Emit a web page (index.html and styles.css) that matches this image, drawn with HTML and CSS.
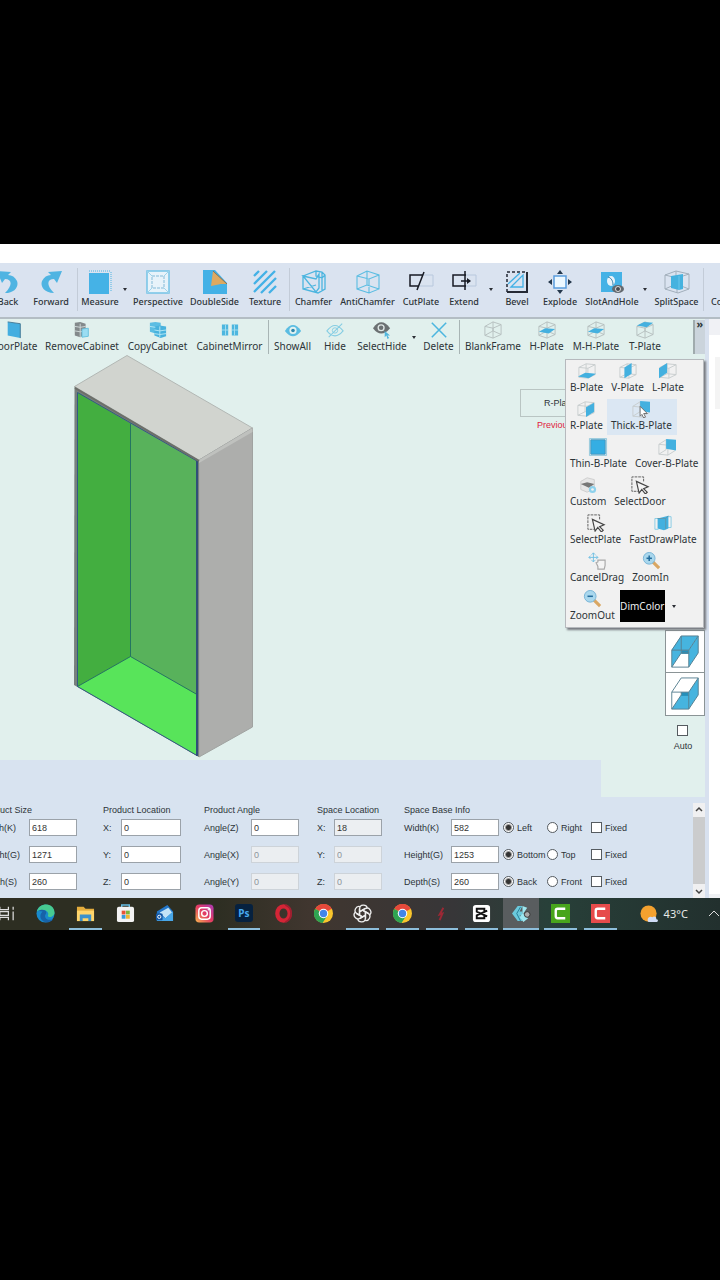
FILE: index.html
```html
<!DOCTYPE html>
<html lang="en">
<head>
<meta charset="utf-8">
<title>Cabinet Designer</title>
<link rel="stylesheet" href="styles.css">
</head>
<body>
<svg class="defs" aria-hidden="true">
  <defs>
    <symbol id="forward" viewBox="0 0 24 24"><path d="M9 2L23 1l-5 12-3-4C8 9 7 15 15 23 5 23 1 16 3 11c2-4 5-6 9-6z" fill="#4fb4e2"/></symbol>
    <symbol id="measure" viewBox="0 0 24 24"><path d="M1 1h21M23 2v20" stroke="#4fb4e2" stroke-dasharray="1 1"/><path d="M1 3h20v21H1z" fill="#45b2e6"/></symbol>
    <symbol id="perspective" viewBox="0 0 24 24"><path d="M1 1h22v22H1z" fill="#e8f3fa" stroke="#74c3e6" stroke-width="1.500"/><path d="M1 1l5 5M23 1l-5 5M1 23l5-5M23 23l-5-5" stroke="#9ed3ea"/><path d="M6 6h12v12H6z" fill="none" stroke="#84bbd8" stroke-dasharray="3 1"/></symbol>
    <symbol id="doubleside" viewBox="0 0 24 24"><path d="M0 0h12l12 13v11H0z" fill="#43b1e6"/><path d="M10 1l14 13-6 0-10 2z" fill="#dda960"/><path d="M10 1l14 13" stroke="#857257"/></symbol>
    <symbol id="texture" viewBox="0 0 24 24"><path d="M1 6l5-5M1 14L14 1M1 22L22 1M8 23L23 8M16 23l7-7" stroke="#43b1e6" stroke-width="2.300"/></symbol>
    <symbol id="cube" viewBox="0 0 24 24"><path d="M1 6l10-5 12 4v14l-10 4-12-4zM1 6l12 3 10-4M13 9v14M11 1v14L1 19M11 15l12 4" fill="none" stroke="currentColor" stroke-width="1.100"/></symbol>
    <symbol id="chamfer" viewBox="0 0 24 24"><path d="M1 6l13-5 6 1 3 3v14l-7 4-15-4zM1 6l13 3 3-5v14l-3 4zM14 1v5l6 2v13M14 15L1 19M20 2v6l3-3" fill="none" stroke="#4cb5df" stroke-width="1.300"/></symbol>
    <symbol id="cutplate" viewBox="0 0 24 24"><path d="M12 5h12v11H10" fill="none" stroke="#b8c8dd"/><path d="M14 5H1v11h8M15 2L8 20" fill="none" stroke="#171a23" stroke-width="1.500"/></symbol>
    <symbol id="extend" viewBox="0 0 24 24"><path d="M14 5h10v11H14" fill="none" stroke="#b8c8dd"/><path d="M14 5H1v11h13M13 1v19M9 11h9" fill="none" stroke="#171a23" stroke-width="1.500"/><path d="M15 8l4 3-4 3z" fill="#171a23"/></symbol>
    <symbol id="bevel" viewBox="0 0 24 24"><path d="M2 22V2h20" fill="none" stroke="#252a35" stroke-width="1.500" stroke-dasharray="3 2"/><path d="M22 2v20H2" fill="none" stroke="#252a35" stroke-width="2"/><path d="M6 17L18 5v12zM3 14L15 3" fill="none" stroke="#43b1e6" stroke-width="1.300"/></symbol>
    <symbol id="explode" viewBox="0 0 24 24"><path d="M6 6h12v12H6z" fill="#edf8ff" stroke="#5b9ddd" stroke-width="1.500"/><path d="M9 4l3-4 3 4zM9 20l3 4 3-4zM4 9l-4 3 4 3zM20 9l4 3-4 3z" fill="#24374b"/></symbol>
    <symbol id="slot" viewBox="0 0 24 24"><path d="M1 2h21v20H1z" fill="#45b2e6"/><ellipse cx="11" cy="11" rx="4" ry="5" fill="#e8f3fa"/><path d="M8 7c4 1 5 5 5 8" stroke="#2c7ba6" fill="none"/><ellipse cx="18" cy="19" rx="6" ry="4" fill="#646a70"/><circle cx="18" cy="19" r="2.500" fill="#464a4f" stroke="#ddd"/></symbol>
    <symbol id="split" viewBox="0 0 26 24"><path d="M1 5l11-4 13 3v15l-11 4-13-4zM1 5l12 3 12-4M13 8v15M12 1v13L1 19M12 14l13 5" fill="none" stroke="#a2afbb"/><path d="M7 6l12-2v15l-4 1-8-2z" fill="#45b2df"/><path d="M15 6v14" stroke="#6bc7ec"/></symbol>
    <symbol id="door" viewBox="0 0 20 20"><path d="M3 1l14 2v16L3 16z" fill="#43aee0"/><path d="M3 1l14 2v16" fill="none" stroke="#407693"/></symbol>
    <symbol id="remove" viewBox="0 0 20 20"><path d="M2 2l6-1 6 2v12l-6 3-6-2z" fill="#83898b"/><path d="M2 6l6 1 6-1M2 11l6 1 6-1M8 3v15" stroke="#d3dddd" fill="none"/><path d="M10 9l7-1v9l-7 1z" fill="#9bddf2" stroke="#63c0dd"/></symbol>
    <symbol id="copy" viewBox="0 0 20 20"><path d="M1 2l6-1 6 1v11l-6 1-6-2z" fill="#5bbde3"/><path d="M6 6l6-1 7 1v11l-6 2-7-3z" fill="#48b2dd"/><path d="M1 6l6 1M6 10l6 1 7-1M12 6v12M6 14l6 1 7-1" stroke="#b8e9f5" fill="none"/></symbol>
    <symbol id="mirror" viewBox="0 0 20 20"><path d="M1 4h7v12H1zM12 4h7v12h-7z" fill="#4db6df"/><path d="M5 4v12M15 4v12M1 10h7M12 10h7" stroke="#a9e0ef"/></symbol>
    <symbol id="eye" viewBox="0 0 20 20"><path d="M1 11q9-13 18 0-9 12-18 0z" fill="currentColor"/><circle cx="10" cy="10.500" r="4" fill="#e2f2f1"/><circle cx="10" cy="10.500" r="2" fill="#2f86ab"/></symbol>
    <symbol id="hide" viewBox="0 0 20 20"><path d="M1 11q9-12 18 0-9 11-18 0zM3 18L18 3" fill="none" stroke="#85cde3" stroke-width="1.200"/><circle cx="10" cy="10.500" r="3" fill="none" stroke="#85cde3"/></symbol>
    <symbol id="selecthide" viewBox="0 0 20 20"><path d="M0 8q9-13 19 0-10 12-19 0z" fill="#6b7072"/><circle cx="9" cy="7.500" r="4" fill="#dfe7e6"/><circle cx="9" cy="7.500" r="2.500" fill="#6b7072"/><path d="M13 11l6 5-3 0 2 3-2 1-1-4-2 2z" fill="#52b6dd"/></symbol>
    <symbol id="delete" viewBox="0 0 20 20"><path d="M2 2l16 16M18 2L2 18" stroke="#4cb6df" stroke-width="1.700"/></symbol>
    <symbol id="frame" viewBox="0 0 20 20"><path d="M1 6l9-5 9 3v11l-9 4-9-3zM1 6l9 2 9-4M10 8v11M10 1v10l-9 5M10 11l9 4" fill="none" stroke="#b4bdbd"/></symbol>
    <symbol id="box" viewBox="0 0 20 20"><path d="M1 6l8-4 10 1v11l-8 4-10-1zM1 6l10 1 8-4M11 7v11M9 2v11l-8 4M9 13l10 1" fill="none" stroke="#c6cccd"/></symbol>
    <symbol id="plate-h" viewBox="0 0 20 20"><use href="#frame"/><path d="M1 12l7-4 11 1-7 5z" fill="#43b0df"/></symbol>
    <symbol id="plate-t" viewBox="0 0 20 20"><use href="#frame"/><path d="M1 5l8-4 10 1-7 5z" fill="#43b0df"/></symbol>
    <symbol id="plate-b" viewBox="0 0 20 20"><use href="#box"/><path d="M0 16l8-4 12 1-8 5z" fill="#43b0df"/></symbol>
    <symbol id="plate-v" viewBox="0 0 20 20"><use href="#box"/><path d="M6 6l8-5v12l-8 5z" fill="#43b0df"/></symbol>
    <symbol id="plate-l" viewBox="0 0 20 20"><use href="#box"/><path d="M0 7l9-6v11l-9 6z" fill="#43b0df"/></symbol>
    <symbol id="plate-r" viewBox="0 0 20 20"><use href="#box"/><path d="M10 8l9-5v10l-9 6z" fill="#43b0df"/></symbol>
    <symbol id="plate-back" viewBox="0 0 20 20"><path d="M1 7l8-5v11l-8 5zM1 7l10 1v11l-10-1M11 19l8-5" fill="none" stroke="#c6cccd"/><path d="M9 1l11 1v12L9 12z" fill="#43b0df"/></symbol>
    <symbol id="thin" viewBox="0 0 20 20"><path d="M.5.5h19v19H.5z" fill="#f5f5f5" stroke="#8fc6da"/><path d="M2 2h16v16H2z" fill="#35aee3" stroke="#3f94bb"/></symbol>
    <symbol id="custom" viewBox="0 0 20 20"><path d="M2 6l7-4 8 2v10l-8 4-7-3z" fill="#e6e6e6" stroke="#ccc"/><path d="M2 9l7-2 8 2-6 4z" fill="#777"/><circle cx="15" cy="15" r="4" fill="#8dd1ec"/><circle cx="15" cy="15" r="1.500" fill="#f1f1f1"/></symbol>
    <symbol id="select" viewBox="0 0 20 20"><path d="M14 6V1H1v16h7" fill="none" stroke="#555" stroke-dasharray="3 1"/><path d="M6 6l13 6-5 2 4 4-2 2-4-5-3 4z" fill="#f4f4f4" stroke="#444" stroke-width="1.300"/></symbol>
    <symbol id="fast" viewBox="0 0 20 20"><path d="M1 5h4M1 5v12h4M15 3h4v12h-4" fill="none" stroke="#83cbe4"/><path d="M4 5l12-3v14l-5 2-7-2z" fill="#43b0df"/><path d="M13 5v12M4 5l9 0 3-3" fill="none" stroke="#5e96ac"/></symbol>
    <symbol id="drag" viewBox="0 0 20 20"><path d="M6 1v10M1 6h10M4 3l2-2 2 2M4 9l2 2 2-2M3 4L1 6l2 2M9 4l2 2-2 2" fill="none" stroke="#6cbde2"/><path d="M11 19v-3l-2-4 2-1V9h8v6l-1 4z" fill="#f4f4f4" stroke="#a9a9a9" stroke-width="1.300"/></symbol>
    <symbol id="lens" viewBox="0 0 20 20"><path d="M12 11l7 7" stroke="#d9a764" stroke-width="3.500"/><circle cx="8" cy="7" r="6.500" fill="#a9d7ed" stroke="#73b1d5"/><path d="M5 7h6" stroke="#236c9d" stroke-width="1.700"/></symbol>
    <symbol id="zoomin" viewBox="0 0 20 20"><use href="#lens"/><path d="M8 4v6" stroke="#236c9d" stroke-width="1.700"/></symbol>
    <symbol id="chrome" viewBox="0 0 20 20"><circle cx="10" cy="10" r="10" fill="#f9c52c"/><path d="M10 10L1.300 5A10 10 0 0 1 18.700 5z" fill="#e5483b"/><path d="M10 10v0L1.300 5A10 10 0 0 0 9 20l5-8z" fill="#2fa452"/><circle cx="10" cy="10" r="5" fill="#fff"/><circle cx="10" cy="10" r="3.900" fill="#4285e8"/></symbol>
  </defs>
</svg>

<main class="app">
  <div class="titlebar"></div>
  <nav class="ribbon" aria-label="Edit tools">
    <button class="tool"><svg class="flip"><use href="#forward"/></svg>Back</button>
    <button class="tool rule"><svg><use href="#forward"/></svg>Forward</button>
    <button class="tool"><svg><use href="#measure"/></svg>Measure</button>
    <button class="drop" aria-label="Measure options"></button>
    <button class="tool"><svg><use href="#perspective"/></svg>Perspective</button>
    <button class="tool"><svg><use href="#doubleside"/></svg>DoubleSide</button>
    <button class="tool rule"><svg><use href="#texture"/></svg>Texture</button>
    <button class="tool"><svg><use href="#chamfer"/></svg>Chamfer</button>
    <button class="tool blue"><svg><use href="#cube"/></svg>AntiChamfer</button>
    <button class="tool"><svg><use href="#cutplate"/></svg>CutPlate</button>
    <button class="tool"><svg><use href="#extend"/></svg>Extend</button>
    <button class="drop" aria-label="Extend options"></button>
    <button class="tool"><svg><use href="#bevel"/></svg>Bevel</button>
    <button class="tool"><svg><use href="#explode"/></svg>Explode</button>
    <button class="tool"><svg><use href="#slot"/></svg>SlotAndHole</button>
    <button class="drop" aria-label="Slot options"></button>
    <button class="tool rule"><svg><use href="#split"/></svg>SplitSpace</button>
    <button class="tool last">Co</button>
  </nav>

  <div class="body">
    <div class="work">
      <nav class="ribbon plates" aria-label="Plate tools">
        <button class="tool"><svg><use href="#door"/></svg>DoorPlate</button>
        <button class="tool"><svg><use href="#remove"/></svg>RemoveCabinet</button>
        <button class="tool"><svg><use href="#copy"/></svg>CopyCabinet</button>
        <button class="tool rule"><svg><use href="#mirror"/></svg>CabinetMirror</button>
        <button class="tool blue"><svg><use href="#eye"/></svg>ShowAll</button>
        <button class="tool"><svg><use href="#hide"/></svg>Hide</button>
        <button class="tool"><svg><use href="#selecthide"/></svg>SelectHide</button>
        <button class="drop" aria-label="Hide options"></button>
        <button class="tool rule"><svg><use href="#delete"/></svg>Delete</button>
        <button class="tool"><svg><use href="#frame"/></svg>BlankFrame</button>
        <button class="tool"><svg><use href="#plate-h"/></svg>H-Plate</button>
        <button class="tool"><svg><use href="#plate-h"/></svg>M-H-Plate</button>
        <button class="tool"><svg><use href="#plate-t"/></svg>T-Plate</button>
        <button class="more" aria-label="More tools">»</button>
      </nav>

      <section class="canvas">
        <svg class="cabinet" viewBox="74 355 180 404" role="img" aria-label="Cabinet model">
          <path d="M74.500 386.500L127 355.500 252.500 428 199 460z" fill="#d1d4cf" stroke="#b2b7b4"/>
          <path d="M199 460l53.500-32v299L199 757z" fill="#adaeac" stroke="#a0a3a1"/>
          <path d="M199 460l53.500-32v4L199 463z" fill="#bfc1be"/>
          <path d="M74.500 386.500L199 460v297l-2-1-123-71z" fill="#77807d"/>
          <path d="M77.500 392.500l53 31v233l-53 30z" fill="#43ae40"/>
          <path d="M130.500 423.500l66.500 38v233l-66.500-38z" fill="#58b25b"/>
          <path d="M77.500 686.500l53-30 66.500 38v61z" fill="#58e45a"/>
          <path d="M130.500 423.500v233l-53 30M130.500 656.500l66.500 38" fill="none" stroke="#247561"/>
          <path d="M77.500 392.500v294l119.500 69V461z" fill="none" stroke="#325b82"/>
          <path d="M197 461v295" stroke="#304f78" stroke-width="2"/>
          <path d="M75 388l124 73" stroke="#6d6e69" stroke-width="2"/>
        </svg>
        <div class="hint">
          <button class="current">R-Plate</button>
          <span class="previous">Previous</span>
        </div>
        <aside class="views">
          <button class="view" aria-label="Open front view"><svg viewBox="0 0 30 36"><path d="M1 16L11 1h18L19 16z" fill="#46b4df"/><path d="M1 16L11 1v18L1 34zM19 16L29 1v18L19 34z" fill="#46b4df"/><path d="M11 16h8v4h-8z" fill="#258fba"/><path d="M1 16h18v18H1zM1 16L11 1h18L19 16M29 1v18L19 34M11 1v18L1 34M11 19h8" fill="none" stroke="#577f91"/></svg></button>
          <button class="view" aria-label="Open top view"><svg viewBox="0 0 30 36"><path d="M1 34l10-15h8V16L29 1v18L19 34z" fill="#46b4df"/><path d="M11 16h8v4h-8z" fill="#258fba"/><path d="M1 16h18v18H1zM1 16L11 1h18L19 16M29 1v18L19 34M11 16v3L1 34" fill="none" stroke="#577f91"/></svg></button>
          <label class="auto"><input type="checkbox">Auto</label>
        </aside>
        <div class="popup">
          <div class="line"><button class="tool"><svg><use href="#plate-b"/></svg>B-Plate</button><button class="tool"><svg><use href="#plate-v"/></svg>V-Plate</button><button class="tool"><svg><use href="#plate-l"/></svg>L-Plate</button></div>
          <div class="line"><button class="tool"><svg><use href="#plate-r"/></svg>R-Plate</button><button class="tool hover"><svg viewBox="0 0 20 20"><use href="#plate-back"/><path d="M9 7v11l2-2 2 4 2-1-2-4h4z" fill="#fff" stroke="#666"/></svg>Thick-B-Plate</button></div>
          <div class="line"><button class="tool"><svg><use href="#thin"/></svg>Thin-B-Plate</button><button class="tool"><svg><use href="#plate-back"/></svg>Cover-B-Plate</button></div>
          <div class="line"><button class="tool"><svg><use href="#custom"/></svg>Custom</button><button class="tool"><svg><use href="#select"/></svg>SelectDoor</button></div>
          <div class="line"><button class="tool"><svg><use href="#select"/></svg>SelectPlate</button><button class="tool"><svg><use href="#fast"/></svg>FastDrawPlate</button></div>
          <div class="line"><button class="tool"><svg><use href="#drag"/></svg>CancelDrag</button><button class="tool"><svg><use href="#zoomin"/></svg>ZoomIn</button></div>
          <div class="line"><button class="tool"><svg><use href="#lens"/></svg>ZoomOut</button><button class="dim">DimColor</button><button class="drop" aria-label="Color options"></button></div>
        </div>
      </section>

      <div class="status"><div class="status-end"></div></div>

      <div class="props">
        <form class="groups">
          <section class="group size">
            <h2>Product Size</h2>
            <label>Width(K)<input value="618"></label>
            <label>Height(G)<input value="1271"></label>
            <label>Depth(S)<input value="260"></label>
          </section>
          <section class="group location">
            <h2>Product Location</h2>
            <label>X:<input value="0"></label>
            <label>Y:<input value="0"></label>
            <label>Z:<input value="0"></label>
          </section>
          <section class="group angle">
            <h2>Product Angle</h2>
            <label>Angle(Z)<input value="0"></label>
            <label>Angle(X)<input value="0" disabled></label>
            <label>Angle(Y)<input value="0" disabled></label>
          </section>
          <section class="group space">
            <h2>Space Location</h2>
            <label>X:<input class="locked" value="18" readonly></label>
            <label>Y:<input value="0" disabled></label>
            <label>Z:<input value="0" disabled></label>
          </section>
          <section class="group base">
            <h2>Space Base Info</h2>
            <div class="base-row"><label>Width(K)<input value="582"></label><label class="opt"><input type="radio" name="w" checked>Left</label><label class="opt"><input type="radio" name="w">Right</label><label class="opt"><input type="checkbox">Fixed</label></div>
            <div class="base-row"><label>Height(G)<input value="1253"></label><label class="opt"><input type="radio" name="h" checked>Bottom</label><label class="opt"><input type="radio" name="h">Top</label><label class="opt"><input type="checkbox">Fixed</label></div>
            <div class="base-row"><label>Depth(S)<input value="260"></label><label class="opt"><input type="radio" name="d" checked>Back</label><label class="opt"><input type="radio" name="d">Front</label><label class="opt"><input type="checkbox">Fixed</label></div>
          </section>
        </form>
        <div class="scroll">
          <svg viewBox="0 0 12 12"><path d="M3 8l3-3 3 3" fill="none" stroke="#444" stroke-width="1.500"/></svg>
          <div class="thumb"></div>
          <svg viewBox="0 0 12 12"><path d="M3 4l3 3 3-3" fill="none" stroke="#444" stroke-width="1.500"/></svg>
        </div>
      </div>
    </div>
    <aside class="side"><div class="side-top"></div><div class="side-tab"></div></aside>
  </div>

  <footer class="taskbar">
    <div class="apps">
      <button class="task" aria-label="Task view"><svg viewBox="0 0 20 20"><path d="M3 3v3h9V3M3 17v-3h9v3M3 8h9v4H3zM17 3v3M17 8v9" fill="none" stroke="#ddd" stroke-width="1.300"/></svg></button>
      <button class="task" aria-label="Edge"><svg viewBox="0 0 20 20"><circle cx="10" cy="10" r="9.500" fill="#1889cc"/><path d="M1 8C3-2 19-2 19.500 9c0 5-7 6-7 3 2-4-4-8-11.500-4z" fill="#47ca91"/><path d="M1 8c6-4 12-1 9 3-2 4 3 7 8 5-4 5-11 4-13-1-1-3 0-5 2-7-3-1-5-1-6 0z" fill="#1762a8"/></svg></button>
      <button class="task open" aria-label="Files"><svg viewBox="0 0 20 20"><path d="M1 3h7l2 2h9v13H1z" fill="#e4ad3d"/><path d="M1 7h18v11H1z" fill="#ffd56b"/><path d="M4 18v-7h12v7h-3v-3H7v3z" fill="#3b91cc"/></svg></button>
      <button class="task" aria-label="Store"><svg viewBox="0 0 20 20"><path d="M6 4V1h8v3" fill="none" stroke="#65bde4" stroke-width="1.500"/><rect x="1" y="3" width="18" height="16" rx="2" fill="#f3f3f3"/><path d="M6 7h4v4H6z" fill="#e75436"/><path d="M10.500 7h4v4h-4z" fill="#7cb53c"/><path d="M6 11.500h4v4H6z" fill="#3999d9"/><path d="M10.500 11.500h4v4h-4z" fill="#efb631"/></svg></button>
      <button class="task" aria-label="Mail"><svg viewBox="0 0 20 20"><path d="M2 8l11-7 6 7v10H2z" fill="#2376c9"/><path d="M5 9l9-5 4 5-7 6z" fill="#c2e4f7"/><path d="M2 10l9 5 8-7v10H2z" fill="#48a7e8"/><rect x="1" y="10" width="7" height="7" rx="1" fill="#1558a4"/><circle cx="4.500" cy="13.500" r="1.700" fill="none" stroke="#fff"/></svg></button>
      <button class="task" aria-label="Instagram"><svg viewBox="0 0 20 20"><linearGradient id="ig" x1="0" y1="1" x2="1" y2="0"><stop stop-color="#f9b650"/><stop offset=".5" stop-color="#e33a62"/><stop offset="1" stop-color="#a939b8"/></linearGradient><rect x=".5" y=".5" width="19" height="19" rx="4" fill="url(#ig)"/><rect x="4" y="4" width="12" height="12" rx="3" fill="none" stroke="#fff" stroke-width="1.500"/><circle cx="10" cy="10" r="3" fill="none" stroke="#fff" stroke-width="1.500"/><circle cx="14" cy="6" r=".8" fill="#fff"/></svg></button>
      <button class="task open"><span class="ps">Ps</span></button>
      <button class="task" aria-label="Opera"><svg viewBox="0 0 20 20"><ellipse cx="10" cy="10" rx="6.500" ry="7.500" fill="none" stroke="#d42536" stroke-width="4.500"/><path d="M12 1c8 3 8 15 0 18" fill="none" stroke="#9f1f30" stroke-width="2"/></svg></button>
      <button class="task" aria-label="Chrome"><svg><use href="#chrome"/></svg></button>
      <button class="task open" aria-label="ChatGPT"><svg viewBox="0 0 20 20"><g fill="none" stroke="#eee" stroke-width="1.400"><path id="petal" d="M7 12V5c0-5 7-5 8-1M7 8l6-3.500"/><use href="#petal" transform="rotate(60 10 10)"/><use href="#petal" transform="rotate(120 10 10)"/><use href="#petal" transform="rotate(180 10 10)"/><use href="#petal" transform="rotate(240 10 10)"/><use href="#petal" transform="rotate(300 10 10)"/></g></svg></button>
      <button class="task open" aria-label="Chrome window"><svg><use href="#chrome"/></svg></button>
      <button class="task open" aria-label="Flash tool"><svg viewBox="0 0 20 20"><path d="M12 4l-4 7 3-1-3 7" fill="none" stroke="#9c2835" stroke-width="2"/></svg></button>
      <button class="task open" aria-label="CapCut"><svg viewBox="0 0 20 20"><rect x="1" y="1" width="18" height="18" rx="3" fill="#fff"/><path d="M13 8V5H5v3l11 5M13 12v3H5v-3l11-5" fill="none" stroke="#111" stroke-width="2"/></svg></button>
      <button class="task open active" aria-label="Cabinet Designer"><svg viewBox="0 0 20 20"><path d="M0 10l6-8h5l-3 6h3v4H8l3 6H6z" fill="#6bc9dc"/><path d="M11 2l5 2-4 6 5 5-5 4-4-5 3-4z" fill="#9ce6ef"/><path d="M9 3l-4 7 4 8" fill="none" stroke="#237c96"/><circle cx="16" cy="11" r="3" fill="#aaa" stroke="#333"/></svg></button>
      <button class="task open" aria-label="Camtasia"><svg viewBox="0 0 20 20"><path d="M0 0h20v20H0z" fill="#48a51c"/><path d="M15 5H7q-2 0-2 2v6q0 2 2 2h8" fill="none" stroke="#fff" stroke-width="2.500"/></svg></button>
      <button class="task open" aria-label="Camtasia Recorder"><svg viewBox="0 0 20 20"><path d="M0 0h20v20H0z" fill="#e64b4b"/><path d="M15 5H7q-2 0-2 2v6q0 2 2 2h8" fill="none" stroke="#fff" stroke-width="2.500"/></svg></button>
    </div>
    <div class="weather"><svg viewBox="0 0 20 20"><circle cx="9" cy="9" r="8.500" fill="#f3a12f"/><path d="M8 16c0-4 4-4 5-3 2-2 5 0 4 2 3 0 2 3 0 3h-7q-2 0-2-2z" fill="#cfdcf6"/></svg>43°C</div>
    <button class="tray" aria-label="Hidden icons"><svg viewBox="0 0 12 12"><path d="M1 8l5-5 5 5" fill="none" stroke="#ddd"/></svg></button>
  </footer>
</main>
</body>
</html>
```

FILE: styles.css
```css
* { box-sizing: border-box; }
body {
  margin: 0;
  min-height: 100vh;
  padding-top: 244px;
  background: #000;
  color: #2d3438;
  font: 9px/12px "Liberation Sans", Arial, sans-serif;
  overflow-x: hidden;
}
.defs { position: absolute; width: 0; height: 0; }
button { margin: 0; padding: 0; border: 0; background: none; color: inherit; font: inherit; }
svg { display: block; flex: none; }
.app { overflow: hidden; }
.titlebar { height: 19px; background: #fff; }

.ribbon {
  display: grid;
  grid-template-columns: 34px 53px 44px 6px 60px 53px 49px 47px 61px 46px 40px 14px 38px 48px 56px 10px 54px 1fr;
  height: 56px;
  margin-left: -9px;
  padding: 5px 0 6px;
  background: #dae3f0;
  border-bottom: 2px solid #b3bdc4;
  font: 500 9px/12px "Noto Sans", sans-serif;
}
.tool {
  display: flex;
  flex-direction: column;
  align-items: center;
  gap: 2px;
  padding-top: 2px;
  white-space: nowrap;
}
.tool svg { width: 26px; height: 24px; }
.rule { border-right: 1px solid #c3ccd8; }
.blue svg { color: #5bbde2; }
.flip { transform: scaleX(-1); }
.last { align-items: flex-start; padding: 28px 0 0 7px; }
.drop { display: flex; align-items: center; justify-content: center; }
.drop::before {
  content: "";
  border: 2px solid transparent;
  border-top: 3px solid #2a2e34;
  border-bottom: 0;
}

.body { display: flex; background: #d8e1ef; }
.work { flex: 1; min-width: 0; }
.plates {
  grid-template-columns: 52px 84px 67px 78px 47px 38px 56px 8px 42px 66px 41px 58px 40px 1fr;
  height: 36px;
  margin-left: -12px;
  padding: 1px 0;
  border: 0;
  background: #e1f0ed;
  font: 10px/14px "Noto Sans", sans-serif;
}
.plates .tool, .popup .tool { gap: 0; padding-top: 1px; }
.plates .tool svg, .popup .tool svg { width: 22px; height: 18px; }
.plates .rule { border-color: #a8b5b5; }
.more {
  justify-self: end;
  display: flex;
  justify-content: center;
  width: 12px;
  border-left: 2px solid #a0abad;
  background: #cbd4dc;
  font: bold 11px/8px "Noto Sans", sans-serif;
}

.canvas { position: relative; height: 405px; background: #e1f0ed; }
.cabinet { position: absolute; left: 74px; top: 0; width: 180px; height: 404px; }
.hint {
  position: absolute;
  right: 115px;
  top: 34px;
  display: flex;
  flex-direction: column;
  gap: 2px;
  width: 70px;
}
.current { height: 28px; padding-left: 23px; border: 1px solid #b9c5c3; text-align: left; }
.previous { padding-left: 17px; color: #e02040; }
.views {
  display: flex;
  flex-direction: column;
  align-items: center;
  width: 40px;
  margin-left: auto;
  padding-top: 275px;
}
.view {
  display: flex;
  align-items: center;
  justify-content: center;
  width: 40px;
  height: 43px;
  background: #fff;
  border: 1px solid #8b9496;
}
.view + .view { border-top: 0; }
.view svg { width: 30px; height: 34px; }
.auto { display: flex; flex-direction: column; align-items: center; gap: 4px; padding: 9px 4px 0 0; }

.popup {
  position: absolute;
  right: 1px;
  top: 4px;
  width: 139px;
  padding: 1px 0 0;
  background: #f1f1f1;
  border: 1px solid #b6b9bd;
  box-shadow: 2px 2px 2px #777a80;
  font: 10px/14px "Noto Sans", sans-serif;
}
.line { display: flex; align-items: flex-start; height: 38px; }
.line .tool { height: 36px; padding-right: 4px; padding-left: 4px; }
.line .hover { padding-right: 5px; background: #dbe7f3; }
.dim { width: 45px; height: 32px; margin: 1px 0 0 1px; overflow: hidden; background: #000; color: #eee; }
.line .drop { width: 18px; height: 34px; }

.status { display: flex; justify-content: flex-end; height: 37px; background: #d8e3f0; }
.status-end { width: 104px; background: #e1f0ed; }

.props { display: flex; height: 101px; background: #d8e3f0; }
.groups {
  flex: 1;
  display: grid;
  grid-template-columns: 122px 101px 113px 87px 1fr;
  margin-left: -19px;
  padding-top: 7px;
}
.group { display: flex; flex-direction: column; gap: 10px; }
.group h2 { height: 12px; margin: 0 0 -7px; font: inherit; white-space: nowrap; }
.group label { display: grid; align-items: center; height: 17px; }
.size label { grid-template-columns: 48px 48px; }
.location label { grid-template-columns: 18px 60px; }
.angle label, .base label { grid-template-columns: 47px 48px; }
.space label { grid-template-columns: 17px 48px; }
.group label input:not([type]) {
  width: 100%;
  height: 17px;
  padding: 0 2px;
  border: 1px solid #9ba2a9;
  border-radius: 0;
  background: #fff;
  color: #333;
  font: inherit;
}
.group label input.locked { background: #eceff2; }
.group label input:not([type]):disabled { background: #ebeef1; border-color: #cdd3d9; color: #8d949b; }
.base-row { display: grid; grid-template-columns: 99px 44px 44px 44px; }
.base label.opt { display: flex; gap: 3px; }
input[type="radio"], input[type="checkbox"] {
  appearance: none;
  flex: none;
  width: 11px;
  height: 11px;
  margin: 0;
  border: 1px solid #555b60;
  background: #fff;
}
input[type="radio"] { border-radius: 50%; }
input[type="radio"]:checked { background: radial-gradient(#333 0 2px, #fff 4px); }
.scroll { display: flex; flex-direction: column; width: 12px; margin: 6px 0 0; background: #f0f0f1; }
.scroll svg { width: 12px; height: 12px; }
.thumb { flex: 1; margin: 2px 0; background: #cbcccd; }

.side { width: 11px; margin-left: 4px; background: #fff; border-bottom: 4px solid #eff1f4; }
.side-top { height: 16px; background: #f0f1f5; }
.side-tab { width: 5px; height: 52px; margin: 22px 0 0 auto; background: #f4f4f4; }

.taskbar {
  display: flex;
  height: 32px;
  background: linear-gradient(90deg, #2d2e22 0 30%, #40362f 43%, #373638 63%, #284039 76%, #22302e);
}
.apps { display: grid; grid-template-columns: repeat(16, 1fr); width: 88%; margin-left: -13px; }
.task { display: flex; align-items: center; justify-content: center; margin: 0 4px 0 3px; border-bottom: 2px solid transparent; }
.task.open { border-color: #8dbedb; }
.task.active { margin: 0 2px 0 1px; background: #595d5f; }
.task svg { width: 19px; height: 19px; }
.ps {
  width: 18px;
  height: 18px;
  border-radius: 3px;
  background: #06213f;
  color: #48a8ee;
  font: bold 10px/18px "Noto Sans", sans-serif;
}
.weather { display: flex; align-items: center; gap: 5px; margin-left: 19px; color: #e7e9e9; font: 11px/16px "Noto Sans", sans-serif; white-space: nowrap; }
.weather svg { width: 19px; height: 19px; }
.tray { display: flex; align-items: center; margin-left: auto; }
.tray svg { width: 12px; height: 12px; }
```
